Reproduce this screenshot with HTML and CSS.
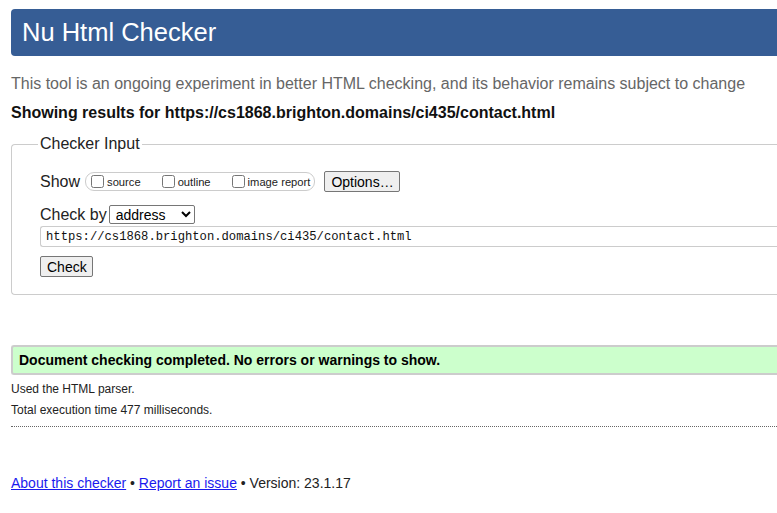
FILE: index.html
```html
<!DOCTYPE html>
<html lang="en">
<head>
<meta charset="utf-8">
<title>Showing results for contact.html - Nu Html Checker</title>
<link rel="stylesheet" href="styles.css">
</head>
<body>
<div class="page">
  <h1 class="title">Nu Html Checker</h1>
  <p class="intro">This tool is an ongoing experiment in better HTML checking, and its behavior remains subject to change</p>
  <p class="showing">Showing results for https://cs1868.brighton.domains/ci435/contact.html</p>
  <fieldset class="input">
    <legend class="legend">Checker Input</legend>
    <div class="row show-row">
      <span class="label">Show</span>
      <span class="pill">
        <label class="opt"><input type="checkbox" class="cb">source</label>
        <label class="opt"><input type="checkbox" class="cb">outline</label>
        <label class="opt last"><input type="checkbox" class="cb">image report</label>
      </span>
      <button class="btn options">Options…</button>
    </div>
    <div class="row by-row">
      <span class="label">Check by</span>
      <select class="sel"><option>address</option></select>
    </div>
    <input class="url" type="text" value="https://cs1868.brighton.domains/ci435/contact.html">
    <div class="row submit-row">
      <button class="btn check">Check</button>
    </div>
  </fieldset>
  <div class="success">Document checking completed. No errors or warnings to show.</div>
  <p class="small">Used the HTML parser.</p>
  <p class="small">Total execution time 477 milliseconds.</p>
  <hr class="dots">
  <p class="footer"><a href="#about">About this checker</a> • <a href="#report">Report an issue</a> • Version: 23.1.17</p>
</div>
</body>
</html>
```

FILE: styles.css
```css
html, body {
  margin: 0;
  padding: 0;
  overflow: hidden;
  background: #fff;
}
body {
  font-family: "Liberation Sans", Arial, sans-serif;
  color: #111;
}
.page {
  width: 840px;
  padding: 9px 0 0 11px;
}
.title {
  margin: 0;
  height: 47px;
  box-sizing: border-box;
  padding: 9px 11px;
  background: #365d95;
  color: #fff;
  font-weight: normal;
  font-size: 25.5px;
  line-height: 29px;
  border-radius: 4px 0 0 4px;
}
.intro {
  margin: 19px 0 0;
  font-size: 16px;
  line-height: 18px;
  color: #666;
}
.showing {
  margin: 11px 0 0;
  font-size: 16px;
  line-height: 18px;
  font-weight: bold;
  color: #111;
}
.input {
  margin: 13px 0 0;
  padding: 0 0 17px 28px;
  border: 1px solid #ccc;
  border-right: none;
  border-radius: 4px 0 0 4px;
}
.legend {
  padding: 0 2px;
  margin-left: -2px;
  font-size: 16px;
  line-height: 18px;
  color: #222;
}
.row {
  display: flex;
  align-items: center;
}
.label {
  font-size: 16px;
  color: #222;
}
.show-row {
  margin-top: 18px;
  height: 21px;
}
.pill {
  display: inline-flex;
  align-items: center;
  margin-left: 5px;
  height: 19px;
  box-sizing: border-box;
  border: 1px solid #ccc;
  border-radius: 9px;
  padding: 0 4px 0 2px;
}
.opt {
  display: inline-flex;
  align-items: center;
  font-size: 11.2px;
  color: #222;
  margin-right: 18px;
}
.opt.last {
  margin-right: 0;
}
.cb {
  width: 13px;
  height: 13px;
  margin: 0 3px 0 3px;
}
.btn {
  font-family: "Liberation Sans", Arial, sans-serif;
  font-size: 14px;
  color: #000;
  background: #efefef;
  border: 1px solid #767676;
  border-radius: 2px;
  padding: 0 6px;
  height: 21px;
}
.options {
  margin-left: 9px;
  width: 76px;
}
.by-row {
  margin-top: 13px;
  height: 19px;
}
.sel {
  margin-left: 2px;
  width: 86px;
  height: 19px;
  font-family: "Liberation Sans", Arial, sans-serif;
  font-size: 14px;
  color: #000;
  border: 1px solid #767676;
  border-radius: 2px;
  background: #fff;
  padding: 0 2px;
}
.url {
  display: block;
  margin: 2px 0 0;
  width: 100%;
  height: 21px;
  box-sizing: border-box;
  border: 1px solid #ccc;
  border-right: none;
  border-radius: 3px 0 0 3px;
  padding: 1px 5px 0;
  font-family: "Liberation Mono", "DejaVu Sans Mono", monospace;
  font-size: 12.2px;
  color: #111;
  outline: none;
}
.submit-row {
  margin-top: 9px;
}
.check {
  width: 53px;
}
.success {
  margin-top: 50px;
  height: 30px;
  box-sizing: border-box;
  border: 2px solid #ccc;
  border-right: none;
  border-radius: 3px 0 0 3px;
  background: #ccffcc;
  padding: 0 0 0 6px;
  font-size: 14px;
  line-height: 26px;
  font-weight: bold;
  color: #000;
}
.small {
  margin: 0;
  font-size: 12px;
  line-height: 21px;
  color: #222;
}
.success + .small {
  margin-top: 4px;
}
.dots {
  margin: 5px 0 0;
  height: 0;
  border: none;
  border-top: 1px dotted #666;
}
.footer {
  margin: 48px 0 0;
  font-size: 14px;
  line-height: 16px;
  color: #222;
}
.footer a {
  color: #1a1aee;
}
```
